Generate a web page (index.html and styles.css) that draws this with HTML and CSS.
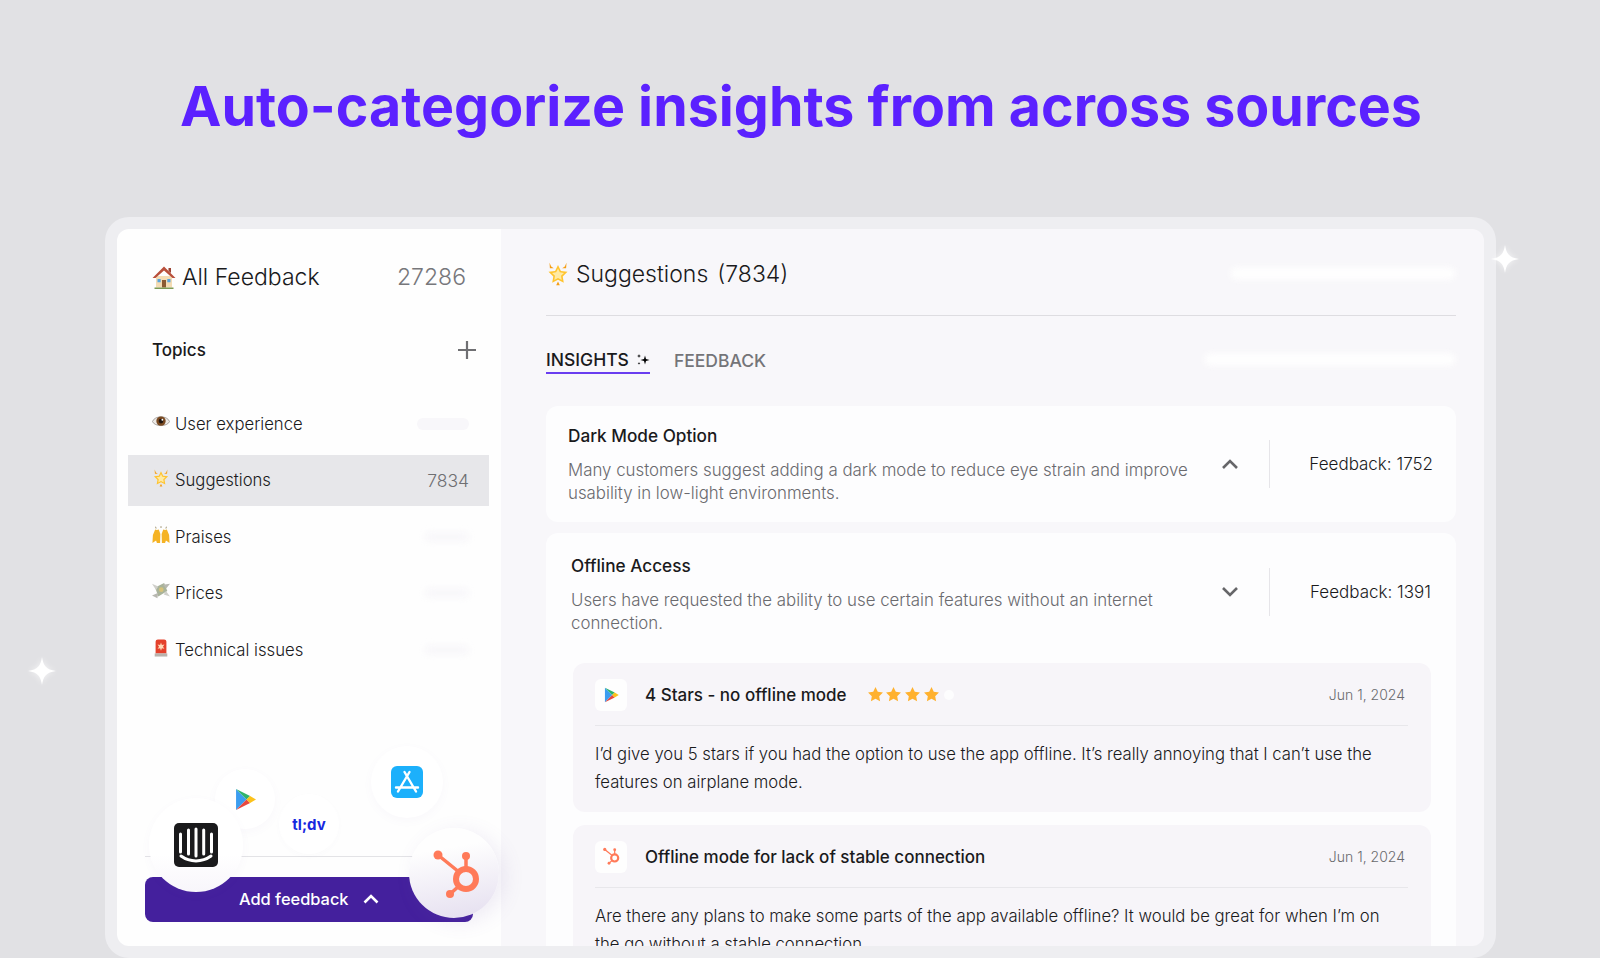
FILE: index.html
```html
<!DOCTYPE html>
<html lang="en">
<head>
  <meta charset="UTF-8">
  <meta name="viewport" content="width=device-width, initial-scale=1.0">
  <title>Auto-categorize insights</title>
  <link rel="stylesheet" href="styles.css">
</head>
<body>

  <!-- Shared icons -->
  <svg class="icon-defs" width="0" height="0">
    <symbol id="i-star" viewBox="0 0 24 24">
      <path d="M12 1.500l3.200 6.700 7.300 1-5.300 5.100 1.300 7.200-6.500-3.500-6.500 3.500 1.300-7.200L1.500 9.200l7.300-1z" fill="#ffb12e"/>
    </symbol>
    <symbol id="i-glow" viewBox="0 0 24 24">
      <path d="M12 3l2.900 5.900 6.600.9-4.800 4.600 1.100 6.400-5.800-3-5.800 3 1.100-6.400-4.800-4.600 6.600-.9z" fill="#ffc42e"/>
      <path d="M12 6.500l1.800 3.800 4.200.6-3 2.900.7 4.100-3.700-2-3.700 2 .7-4.100-3-2.900 4.200-.6z" fill="#ffeaa3"/>
      <path d="M3.500.8l1.700 3.700 2.600 1.700-3.900.1zM20.500.8l-1.700 3.700-2.600 1.700 3.900.1zM12 19.500l1.800 3.700h-3.600z" fill="#f59e14"/>
    </symbol>
    <symbol id="i-play" viewBox="0 0 20 22">
      <path d="M1 1l10 10L1 21z" fill="#3b9df0"/>
      <path d="M1 1l10 10 3.400-3.400z" fill="#2fb36b"/>
      <path d="M1 21l10-10 3.400 3.400z" fill="#e8483f"/>
      <path d="M14.400 7.600L20 11l-5.600 3.400L11 11z" fill="#fcc21b"/>
    </symbol>
    <symbol id="i-hubspot" viewBox="0 0 48 52">
      <g fill="none" stroke="#ff7a59">
        <circle cx="33" cy="30" r="10" stroke-width="6"/>
        <path d="M5 6l21 17M33 7v14M17 45l9-8" stroke-width="3.500"/>
      </g>
      <g fill="#ff7a59">
        <circle cx="5" cy="6" r="4.500"/>
        <circle cx="33" cy="7" r="4"/>
        <circle cx="17" cy="45" r="4"/>
      </g>
    </symbol>
  </svg>

  <h1 class="headline">Auto-categorize insights from across sources</h1>

  <div class="frame">
    <div class="app">

      <!-- Sidebar -->
      <aside class="sidebar">
        <div class="all-row">
          <span class="all-label">
            <svg class="emoji-lg" viewBox="0 0 24 24">
              <path d="M4 11h16v11.500H4z" fill="#f4dcb4"/>
              <path d="M12 1.500L.5 13h3L12 5.500 20.500 13h3z" fill="#b9503c"/>
              <path d="M16.500 3H19v5l-2.500-2z" fill="#9c4433"/>
              <path d="M10 15h4v7.500h-4z" fill="#8a5a33"/>
              <path d="M5.500 14h3.200v3.200H5.500zM15.300 14h3.200v3.200h-3.200z" fill="#5aa6dd"/>
              <path d="M2.500 22.500h19V24h-19z" fill="#7d9a55"/>
            </svg>
            All Feedback
          </span>
          <span class="all-count">27286</span>
        </div>
        <div class="topics-row">
          <span class="topics-title">Topics</span>
          <svg class="plus" viewBox="0 0 20 20"><path d="M10 1v18M1 10h18"/></svg>
        </div>

        <ul class="topic-list">
          <li class="topic">
            <svg class="emoji" viewBox="0 0 20 20">
              <path d="M.5 9.500C3 2.500 17 2.500 19.500 9.500 17 15.500 3 15.500.5 9.500z" fill="#ece9e6" stroke="#8d8783" stroke-width=".8"/>
              <circle cx="10" cy="9" r="5.200" fill="#7a4a22"/>
              <circle cx="10" cy="9" r="2.600" fill="#1d1410"/>
              <circle cx="11.500" cy="7.500" r="1" fill="#fff"/>
            </svg>
            <span class="topic-name">User experience</span>
            <span class="ghost ghost-solid"></span>
          </li>
          <li class="topic topic-active">
            <svg class="emoji"><use href="#i-glow"/></svg>
            <span class="topic-name">Suggestions</span>
            <span class="topic-count">7834</span>
          </li>
          <li class="topic">
            <svg class="emoji" viewBox="0 0 20 20">
              <path d="M.5 19l.5-9 2.500-6 2 .5L7.500 4 9.300 9 9 19H5.500l-1-3zM19.500 19l-.5-9-2.500-6-2 .5L12.500 4l-1.800 5 .3 10h3.500l1-3z" fill="#f5b324"/>
              <path d="M4 .8l.5 2M10 .2v2M16 .8l-.5 2" stroke="#8a7a50" stroke-width=".9"/>
            </svg>
            <span class="topic-name">Praises</span>
            <span class="ghost"></span>
          </li>
          <li class="topic">
            <svg class="emoji" viewBox="0 0 20 20">
              <path d="M3.500 6l10-5 3.500 9-10 6z" fill="#a9b39a"/>
              <path d="M0 2l7 3-2.500 4zM20 16l-7-2 2.500-4z" fill="#cfcfca"/>
              <path d="M0 15l7-3-1 6zM12 3l8-1-4 5z" fill="#b8b8b1"/>
              <circle cx="10.300" cy="8.500" r="2.600" fill="#d6c27a"/>
            </svg>
            <span class="topic-name">Prices</span>
            <span class="ghost"></span>
          </li>
          <li class="topic">
            <svg class="emoji" viewBox="0 0 20 20">
              <path d="M4 3a2.500 2.500 0 0 1 2.500-2.500h7A2.500 2.500 0 0 1 16 3v13H4z" fill="#e4412b"/>
              <path d="M3 16h14v3.500H3z" fill="#b9b3ad"/>
              <path d="M10 4l1 2.800 2.800-.6-1.600 2.300 1.600 2.300-2.800-.6-1 2.800-1-2.800-2.800.6 1.600-2.300-1.600-2.300 2.800.6z" fill="#ffd9b8"/>
            </svg>
            <span class="topic-name">Technical issues</span>
            <span class="ghost"></span>
          </li>
        </ul>

        <div class="side-foot">
          <div class="side-rule"></div>
          <button class="add-btn">
            Add feedback
            <svg class="add-chev" viewBox="0 0 16 10"><path d="M1.500 8.500L8 2l6.500 6.500"/></svg>
          </button>
        </div>

        <!-- Source logos floating over the sidebar footer -->
        <div class="bubble bubble-play"><svg class="logo-play"><use href="#i-play"/></svg></div>
        <div class="bubble bubble-tldv"><span class="tldv">tl;dv</span></div>
        <div class="bubble bubble-store">
          <svg class="logo-store" viewBox="0 0 32 32">
            <rect width="32" height="32" rx="6" fill="#1cb0fb"/>
            <path d="M7 25.500L18.500 6M25 25.500L13.500 6M5 21.500h22" fill="none" stroke="#fff" stroke-width="2.400" stroke-linecap="round"/>
          </svg>
        </div>
        <div class="bubble bubble-intercom">
          <svg class="logo-intercom" viewBox="0 0 44 44">
            <rect width="44" height="44" rx="5" fill="#1a1a1c"/>
            <path d="M6.500 11v18M14.500 7v24M22 6v27M29.700 7v24M37.500 11v18" stroke="#fff" stroke-width="3" stroke-linecap="round"/>
            <path d="M7 33c9 6.500 21 6.500 30 0" fill="none" stroke="#fff" stroke-width="3" stroke-linecap="round"/>
          </svg>
        </div>
        <div class="bubble bubble-hub"><svg class="logo-hub"><use href="#i-hubspot"/></svg></div>
      </aside>

      <!-- Main panel -->
      <main class="panel">
        <div class="panel-head">
          <svg class="emoji-lg"><use href="#i-glow"/></svg>
          <span class="panel-title">Suggestions</span>
          <span class="panel-title panel-num">(7834)</span>
          <span class="blur-bar blur-bar-top"></span>
        </div>

        <div class="tabs">
          <span class="tab tab-active">
            INSIGHTS
            <svg class="tab-spark" viewBox="0 0 14 14">
              <path d="M9 2.500l1 3.500 3.500 1-3.500 1-1 3.500-1-3.500-3.500-1 3.500-1zM3 1l.5 1.500L5 3l-1.500.5L3 5l-.5-1.500L1 3l1.500-.5zM3 9l.4 1 1 .4-1 .4-.4 1-.4-1-1-.4 1-.4z"/>
            </svg>
          </span>
          <span class="tab">FEEDBACK</span>
          <span class="blur-bar blur-bar-tabs"></span>
        </div>

        <section class="card">
          <div class="card-main">
            <h3 class="card-title">Dark Mode Option</h3>
            <p class="card-desc">Many customers suggest adding a dark mode to reduce eye strain and improve usability in low-light environments.</p>
          </div>
          <svg class="chev" viewBox="0 0 18 12"><path d="M2 10l7-7 7 7"/></svg>
          <div class="card-count">Feedback: 1752</div>
        </section>

        <section class="card card-open">
          <div class="card-top">
            <div class="card-main">
              <h3 class="card-title">Offline Access</h3>
              <p class="card-desc">Users have requested the ability to use certain features without an internet connection.</p>
            </div>
            <svg class="chev" viewBox="0 0 18 12"><path d="M2 2l7 7 7-7"/></svg>
            <div class="card-count">Feedback: 1391</div>
          </div>

          <article class="review">
            <div class="review-head">
              <span class="review-icon"><svg class="review-play"><use href="#i-play"/></svg></span>
              <span class="review-title">4 Stars - no offline mode</span>
              <span class="stars">
                <svg class="star"><use href="#i-star"/></svg>
                <svg class="star"><use href="#i-star"/></svg>
                <svg class="star"><use href="#i-star"/></svg>
                <svg class="star"><use href="#i-star"/></svg>
                <span class="star-empty"></span>
              </span>
              <span class="review-date">Jun 1, 2024</span>
            </div>
            <p class="review-text">I’d give you 5 stars if you had the option to use the app offline. It’s really annoying that I can’t use the features on airplane mode.</p>
          </article>

          <article class="review">
            <div class="review-head">
              <span class="review-icon"><svg class="review-hub"><use href="#i-hubspot"/></svg></span>
              <span class="review-title">Offline mode for lack of stable connection</span>
              <span class="review-date">Jun 1, 2024</span>
            </div>
            <p class="review-text">Are there any plans to make some parts of the app available offline? It would be great for when I’m on the go without a stable connection.</p>
          </article>
        </section>
      </main>
    </div>
  </div>

  <!-- Sparkles on the page background -->
  <svg class="sparkle sparkle-right" viewBox="0 0 28 28"><path d="M14 0c1.500 9 4 12.500 14 14-10 1.500-12.500 5-14 14-1.500-9-4-12.500-14-14 10-1.500 12.500-5 14-14z"/></svg>
  <svg class="sparkle sparkle-left" viewBox="0 0 28 28"><path d="M14 0c1.500 9 4 12.500 14 14-10 1.500-12.500 5-14 14-1.500-9-4-12.500-14-14 10-1.500 12.500-5 14-14z"/></svg>

</body>
</html>
```

FILE: styles.css
```css
/* Reset margin and padding */
body, html {
  margin: 0;
  padding: 0;
  height: 100%;
  overflow: hidden;
}

body {
  position: relative;
  background: #e1e1e4;
  color: #1a1a1c;
  font-family: Inter, "Liberation Sans", sans-serif;
}

.icon-defs {
  position: absolute;
}

h1, h3, p, ul {
  margin: 0;
  padding: 0;
}

.headline {
  height: 217px;
  box-sizing: border-box;
  padding: 70px 0 0 2px;
  text-align: center;
  font-size: 55.5px;
  line-height: 72px;
  font-weight: 700;
  color: #5b21ff;
}

/* Outer frame */
.frame {
  height: 741px;
  box-sizing: border-box;
  margin: 0 104px 0 105px;
  padding: 12px;
  background: #eeeef1;
  border-radius: 24px;
}

.app {
  display: flex;
  height: 100%;
  border-radius: 12px;
  overflow: hidden;
}

/* Sidebar */
.sidebar {
  position: relative;
  display: flex;
  flex-direction: column;
  flex: 0 0 384px;
  box-sizing: border-box;
  padding: 24px 12px 24px 11px;
  background: #fefefe;
}

.all-row {
  display: flex;
  align-items: center;
  justify-content: space-between;
  height: 48px;
  padding: 0 23px 0 24px;
  font-size: 23px;
  font-weight: 300;
}

.all-label {
  display: flex;
  align-items: center;
  gap: 6px;
  color: #1a1a1c;
}

.all-count {
  color: #77777b;
}

.emoji-lg {
  width: 24px;
  height: 24px;
}

.topics-row {
  display: flex;
  align-items: center;
  justify-content: space-between;
  height: 40px;
  margin-top: 29px;
  padding: 0 12px 0 24px;
}

.topics-title {
  font-size: 17px;
  font-weight: 500;
}

.plus {
  width: 20px;
  height: 20px;
}

.plus path {
  fill: none;
  stroke: #6f6f72;
  stroke-width: 2.200;
}

.topic-list {
  display: flex;
  flex-direction: column;
  gap: 5.5px;
  margin-top: 28px;
  list-style: none;
}

.topic {
  display: flex;
  align-items: center;
  gap: 5px;
  height: 51px;
  padding: 0 20px 0 24px;
  font-size: 16.7px;
  font-weight: 300;
}

.topic-active {
  background: #e7e7ea;
}

.emoji {
  width: 18px;
  height: 18px;
  margin-top: -4px;
}

.topic-name {
  flex: 1;
}

.topic-count {
  font-size: 17.500px;
  color: #6f6f72;
}

.ghost {
  width: 44px;
  height: 10px;
  border-radius: 6px;
  background: #f8f7fa;
  filter: blur(3px);
}

.ghost-solid {
  width: 52px;
  height: 12px;
  filter: none;
}

/* Sidebar footer */
.side-foot {
  margin-top: auto;
  padding: 0 16.5px 0 17px;
}

.side-rule {
  height: 1px;
  margin-bottom: 20px;
  background: #e3e3e6;
}

.add-btn {
  display: flex;
  align-items: center;
  justify-content: center;
  gap: 14px;
  width: 100%;
  height: 45px;
  padding: 0 0 2px;
  border: 0;
  border-radius: 8px;
  background: #44209d;
  color: #fff;
  font-family: inherit;
  font-size: 16.4px;
  font-weight: 500;
}

.add-chev {
  width: 16px;
  height: 10px;
}

.add-chev path {
  fill: none;
  stroke: #fff;
  stroke-width: 2.6;
}

/* Floating source logos */
.bubble {
  position: absolute;
  display: flex;
  align-items: center;
  justify-content: center;
  border-radius: 50%;
  background: #fff;
  box-shadow: 0 3px 10px rgba(120, 100, 170, 0.04);
}

.bubble-play {
  left: 98px;
  top: 540px;
  width: 60px;
  height: 60px;
}

.bubble-tldv {
  left: 162px;
  top: 565px;
  width: 60px;
  height: 60px;
  box-shadow: 0 2px 6px rgba(120, 100, 170, 0.02);
}

.bubble-store {
  left: 254px;
  top: 517px;
  width: 72px;
  height: 72px;
}

.bubble-intercom {
  left: 32px;
  top: 569px;
  width: 94px;
  height: 94px;
  background: linear-gradient(180deg, #fff 60%, #f8f6fb 100%);
}

.bubble-hub {
  left: 292px;
  top: 599px;
  width: 90px;
  height: 90px;
  background: linear-gradient(170deg, #fefefe 25%, #e4deef 100%);
  box-shadow: 6px 4px 20px rgba(120, 100, 170, 0.12);
}

.logo-play {
  width: 21px;
  height: 23px;
}

.tldv {
  font-size: 15px;
  font-weight: 700;
  color: #1729e0;
}

.logo-store {
  width: 32px;
  height: 32px;
}

.logo-intercom {
  width: 44px;
  height: 44px;
}

.logo-hub {
  width: 48px;
  height: 52px;
  margin-left: 6px;
  margin-top: 3px;
}

/* Main panel */
.panel {
  flex: 1;
  min-width: 0;
  box-sizing: border-box;
  padding: 21px 28px 0 45px;
  background: #f8f7fa;
  overflow: hidden;
}

.panel-head {
  position: relative;
  display: flex;
  align-items: center;
  height: 66px;
  border-bottom: 1px solid #dedde1;
  padding-bottom: 17px;
  box-sizing: border-box;
}

.panel-title {
  margin-left: 6px;
  font-size: 23px;
  font-weight: 300;
}

.panel-num {
  margin-left: 9px;
}

.blur-bar {
  position: absolute;
  right: 0;
  height: 13px;
  border-radius: 7px;
  background: #fefefe;
  filter: blur(3px);
}

.blur-bar-top {
  top: 17px;
  width: 226px;
}

.blur-bar-tabs {
  top: 37px;
  width: 252px;
}

.tabs {
  position: relative;
  display: flex;
  align-items: flex-start;
  gap: 24px;
  height: 90px;
  padding-top: 29px;
  box-sizing: border-box;
}

.tab {
  display: flex;
  align-items: center;
  gap: 7px;
  height: 29px;
  padding-top: 2px;
  box-sizing: border-box;
  font-size: 17.5px;
  font-weight: 500;
  color: #747478;
}

.tab-active {
  color: #1a1a1c;
  border-bottom: 2px solid #6a3df0;
}

.tab-spark {
  width: 14px;
  height: 14px;
}

/* Insight cards */
.card {
  display: flex;
  align-items: center;
  box-sizing: border-box;
  height: 116px;
  padding: 0 23px 0 22px;
  background: #fdfdfe;
  border-radius: 12px;
}

.card-main {
  flex: 1;
  min-width: 0;
  padding-top: 1px;
  padding-right: 20px;
}

.card-title {
  font-size: 17.2px;
  font-weight: 500;
  line-height: 24px;
}

.card-desc {
  margin-top: 11px;
  font-size: 16.85px;
  font-weight: 300;
  line-height: 23px;
  color: #6a6a6e;
}

.chev {
  flex: none;
  width: 18px;
  height: 12px;
  margin-right: 30px;
}

.chev path {
  fill: none;
  stroke: #666669;
  stroke-width: 2.6;
}

.card-count {
  flex: none;
  width: 164px;
  height: 48px;
  box-sizing: border-box;
  border-left: 1px solid #e6e5e9;
  text-align: right;
  font-size: 17px;
  font-weight: 300;
  line-height: 48px;
}

.card-open {
  display: block;
  height: 480px;
  margin-top: 11px;
  padding: 0 25px;
}

.card-top {
  display: flex;
  align-items: center;
  height: 118px;
  margin-bottom: 12px;
}

.card-open .card-main {
  padding-top: 4px;
}

.card-open .card-count {
  width: 162px;
}

/* Feedback entries */
.review {
  height: 149px;
  box-sizing: border-box;
  margin: 0 0 13px 2px;
  padding: 16px 23px 0 22px;
  background: #f7f5f9;
  border-radius: 12px;
}

.review-head {
  display: flex;
  align-items: center;
  height: 47px;
  padding-bottom: 15px;
  box-sizing: border-box;
  border-bottom: 1px solid #e8e7eb;
}

.review-icon {
  display: flex;
  align-items: center;
  justify-content: center;
  width: 32px;
  height: 32px;
  margin-right: 18px;
  border-radius: 6px;
  background: #fefefe;
}

.review-play {
  width: 15px;
  height: 16px;
}

.review-hub {
  width: 17px;
  height: 19px;
}

.review-title {
  font-size: 17px;
  font-weight: 500;
}

.stars {
  display: flex;
  align-items: center;
  gap: 1.7px;
  margin-left: 20px;
}

.star {
  width: 17px;
  height: 17px;
}

.star-empty {
  width: 10px;
  height: 10px;
  margin-left: 3px;
  border-radius: 50%;
  background: #fdfdfe;
}

.review-date {
  margin-left: auto;
  padding-right: 3px;
  font-size: 14px;
  font-weight: 300;
  color: #6a6a6e;
}

.review-text {
  padding-top: 14px;
  font-size: 16.7px;
  font-weight: 300;
  line-height: 28px;
}

/* Sparkles */
.sparkle {
  position: absolute;
  width: 28px;
  height: 28px;
  fill: #fff;
  filter: drop-shadow(0 0 3px rgba(255, 255, 255, 0.7));
}

.sparkle-right {
  left: 1491px;
  top: 245px;
}

.sparkle-left {
  left: 28px;
  top: 657px;
}
```
